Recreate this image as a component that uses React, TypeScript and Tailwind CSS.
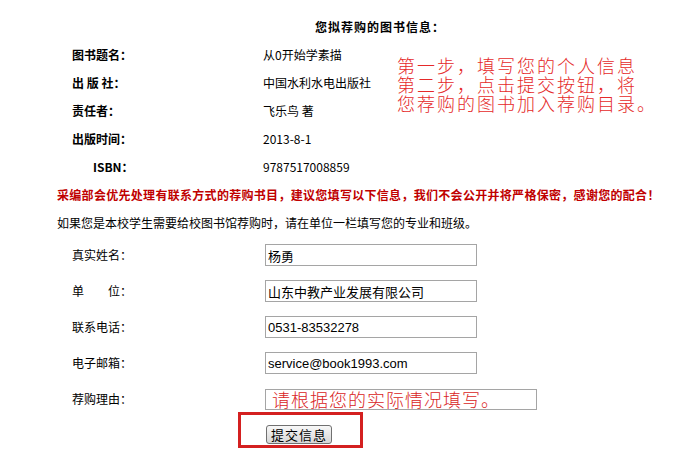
import * as React from 'react'

const INFO = [
  { label: '图书题名：', value: '从0开始学素描' },
  { label: '出 版 社：', value: '中国水利水电出版社' },
  { label: '责任者：', value: '飞乐鸟 著' },
  { label: '出版时间：', value: '2013-8-1' },
  { label: 'ISBN：', value: '9787517008859', indent: true },
]

const FIELDS = [
  { label: '真实姓名：', value: '杨勇' },
  { label: '单\u3000\u3000位：', value: '山东中教产业发展有限公司' },
  { label: '联系电话：', value: '0531-83532278' },
  { label: '电子邮箱：', value: 'service@book1993.com' },
]

export default function App() {
  return (
    <div className="relative w-[674px] h-[450px] overflow-hidden bg-white text-[12px] text-black font-['SimSun','Noto_Sans_CJK_SC',sans-serif]">
      <div className="flex flex-col pt-[13px]">
        <div className="h-[28px] flex items-center pl-[315px] font-bold tracking-[1px]">您拟荐购的图书信息：</div>

        {INFO.map((row) => (
          <div key={row.label} className="h-[28px] flex items-center pl-[72px]">
            <div className={'w-[191px] font-bold ' + (row.indent ? 'pl-[21px]' : '')}>{row.label}</div>
            <div>{row.value}</div>
          </div>
        ))}

        <div className="h-[28px] flex items-center pl-[57px] font-bold tracking-[0.3px] text-[#c00000] whitespace-nowrap">
          采编部会优先处理有联系方式的荐购书目，建议您填写以下信息，我们不会公开并将严格保密，感谢您的配合！
        </div>
        <div className="h-[28px] flex items-center pl-[57px]">
          如果您是本校学生需要给校图书馆荐购时，请在单位一栏填写您的专业和班级。
        </div>

        {FIELDS.map((f) => (
          <div key={f.label} className="h-[36px] flex items-center pl-[72px]">
            <div className="w-[193px] whitespace-pre">{f.label}</div>
            <input
              readOnly
              value={f.value}
              className="w-[212px] h-[22px] border border-[#a5a5a5] px-[2px] text-[13px] outline-none font-['Liberation_Sans','Noto_Sans_CJK_SC',sans-serif]"
            />
          </div>
        ))}

        <div className="h-[36px] flex items-center pl-[72px]">
          <div className="w-[193px]">荐购理由：</div>
          <div className="w-[272px] h-[21px] border border-[#a5a5a5] flex items-center pl-[6px] text-[18px] leading-[19px] tracking-[1px] text-[#d92525] font-['Noto_Sans_CJK_SC',sans-serif] font-light whitespace-nowrap">
            请根据您的实际情况填写。
          </div>
        </div>

        <div className="h-[34px] flex items-center pl-[266px]">
          <button className="w-[66px] h-[19px] rounded-[3px] border border-[#707070] bg-gradient-to-b from-[#f8f8f8] to-[#d6d6d6] text-[13px] leading-none tracking-[1px] text-black">
            提交信息
          </button>
        </div>
      </div>

      <div className="absolute left-[397px] top-[56px] flex flex-col text-[18px] leading-[19px] tracking-[2px] font-light text-[#e52a2a] font-['Noto_Sans_CJK_SC',sans-serif] whitespace-nowrap">
        <div>第一步，填写您的个人信息</div>
        <div>第二步，点击提交按钮，将</div>
        <div>您荐购的图书加入荐购目录。</div>
      </div>

      <div className="absolute left-[238px] top-[412px] w-[125px] h-[36px] border-[3px] border-[#d42020]" />
    </div>
  )
}
